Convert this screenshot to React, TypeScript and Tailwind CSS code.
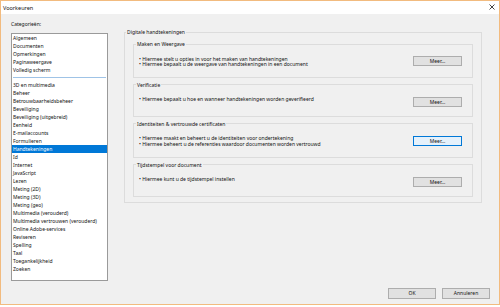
const categoriesTop = ['Algemeen', 'Documenten', 'Opmerkingen', 'Paginaweergave', 'Volledig scherm'];

const categories = [
  '3D en multimedia',
  'Beheer',
  'Betrouwbaarheidsbeheer',
  'Beveiliging',
  'Beveiliging (uitgebreid)',
  'Eenheid',
  'E-mailaccounts',
  'Formulieren',
  'Handtekeningen',
  'Id',
  'Internet',
  'JavaScript',
  'Lezen',
  'Meting (2D)',
  'Meting (3D)',
  'Meting (geo)',
  'Multimedia (verouderd)',
  'Multimedia vertrouwen (verouderd)',
  'Online Adobe-services',
  'Reviseren',
  'Spelling',
  'Taal',
  'Toegankelijkheid',
  'Zoeken',
];

const sections = [
  {
    title: 'Maken en Weergave',
    lines: [
      'Hiermee stelt u opties in voor het maken van handtekeningen',
      'Hiermee bepaalt u de weergave van handtekeningen in een document',
    ],
  },
  {
    title: 'Verificatie',
    lines: ['Hiermee bepaalt u hoe en wanneer handtekeningen worden geverifieerd'],
  },
  {
    title: 'Identiteiten & vertrouwde certificaten',
    lines: [
      'Hiermee maakt en beheert u de identiteiten voor ondertekening',
      'Hiermee beheert u de referenties waardoor documenten worden vertrouwd',
    ],
    focused: true,
  },
  {
    title: 'Tijdstempel voor document',
    lines: ['Hiermee kunt u de tijdstempel instellen'],
  },
];

function ListRow({ label, selected }: { label: string; selected?: boolean }) {
  return (
    <div
      className={`h-[8px] whitespace-nowrap pl-[1px] leading-[8px] ${
        selected ? 'bg-[#0078d7] text-white' : 'text-[#111]'
      }`}
    >
      {label}
    </div>
  );
}

export default function App() {
  return (
    <div className="h-[307px] w-[500px] bg-white font-['Noto_Sans',sans-serif] text-[5px] text-[#111]">
      <div className="flex h-[305px] flex-col border border-[#f2bb7f]">
        {/* title bar */}
        <div className="flex h-[13px] items-center justify-between bg-white pl-[2px] pr-[4px]">
          <span className="text-[5.5px] leading-[8px]">Voorkeuren</span>
          <svg width="6" height="6" viewBox="0 0 6 6" className="mb-[1px]">
            <path d="M0.5 0.5 L5.5 5.5 M5.5 0.5 L0.5 5.5" stroke="#444" strokeWidth="1" />
          </svg>
        </div>

        <div className="flex flex-1 flex-col bg-[#f0f0f0]">
          <div className="flex items-start pt-[6px]">
            {/* categories */}
            <div className="ml-[10px] w-[97px]">
              <div className="h-[8px] leading-[8px]">Categorieën:</div>
              <div className="mt-[5px] h-[248px] border border-[#9a9a9a] bg-white">
                {categoriesTop.map((c) => (
                  <ListRow key={c} label={c} />
                ))}
                <div className="flex h-[7px] items-center px-[1px]">
                  <div className="h-px w-full bg-[#9fc3e6]" />
                </div>
                {categories.map((c) => (
                  <ListRow key={c} label={c} selected={c === 'Handtekeningen'} />
                ))}
              </div>
            </div>

            {/* settings */}
            <fieldset className="ml-[16px] mt-[8px] w-[358px] self-start border border-[#dcdcdc]">
              <legend className="ml-[1px] h-[8px] px-[1px] leading-[8px]">Digitale handtekeningen</legend>
              <div className="flex flex-col gap-[3px] px-[8px] pb-[5px] pt-[4px]">
                {sections.map((s) => (
                  <fieldset key={s.title} className="border border-[#dcdcdc]">
                    <legend className="ml-[2px] h-[8px] px-[1px] leading-[8px]">{s.title}</legend>
                    <div className="flex items-start justify-between pb-[9px] pl-[5px] pr-[10px] pt-[8px]">
                      <div className="pt-[0.5px]">
                        {s.lines.map((l) => (
                          <div key={l} className="h-[5.7px] whitespace-nowrap leading-[5.7px]">
                            • {l}
                          </div>
                        ))}
                      </div>
                      <button
                        className={`h-[10px] w-[49px] border text-[5px] leading-[8px] ${
                          s.focused ? 'border-[#0078d7] bg-[#e5f1fb]' : 'border-[#adadad] bg-[#e1e1e1]'
                        }`}
                      >
                        Meer...
                      </button>
                    </div>
                  </fieldset>
                ))}
              </div>
            </fieldset>
          </div>

          <div className="mt-auto flex justify-end gap-[6px] pb-[5px] pr-[9px]">
            <button className="h-[11px] w-[48px] border border-[#adadad] bg-[#e1e1e1] text-[5px] leading-[9px]">
              OK
            </button>
            <button className="h-[11px] w-[48px] border border-[#adadad] bg-[#e1e1e1] text-[5px] leading-[9px]">
              Annuleren
            </button>
          </div>
        </div>
      </div>
    </div>
  );
}
